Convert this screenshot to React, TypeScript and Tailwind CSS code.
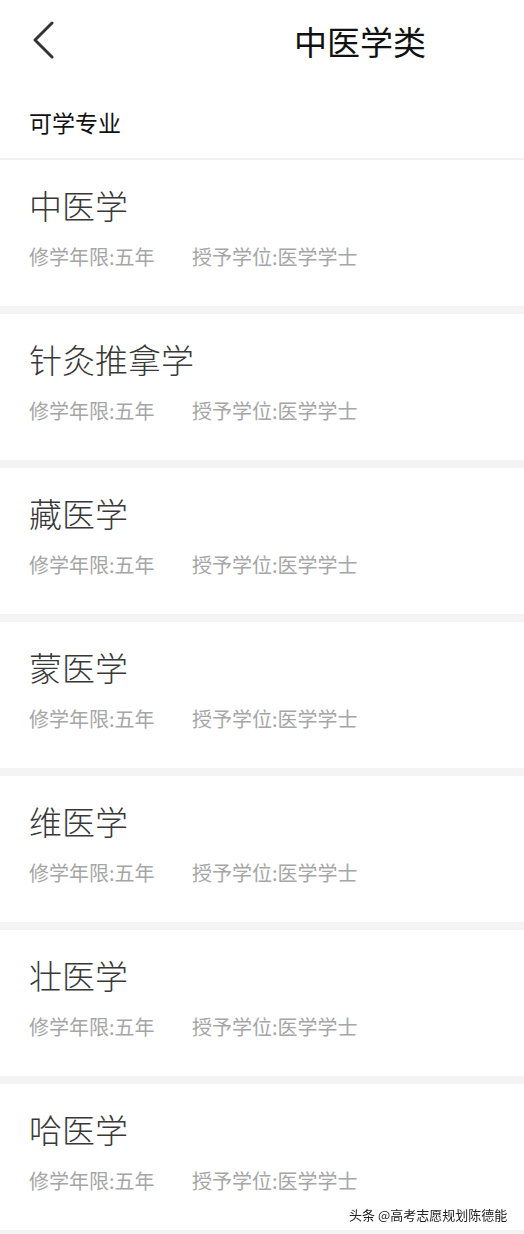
import React from "react";

const majors = ["中医学", "针灸推拿学", "藏医学", "蒙医学", "维医学", "壮医学", "哈医学"];

const font = "font-['Noto_Sans_CJK_SC','Noto_Sans',sans-serif]";

const App = () => {
  return (
    <div className={`w-[524px] min-h-[1234px] bg-[#f4f4f4] ${font}`}>
      {/* Header */}
      <div className="bg-white">
        <div className="h-[82px] flex items-center relative">
          <svg
            className="absolute left-[31px] top-[21px]"
            width="24"
            height="38"
            viewBox="0 0 24 38"
            fill="none"
          >
            <path
              d="M21 2 L4 19 L21 36"
              stroke="#333"
              strokeWidth="3"
              strokeLinecap="round"
              strokeLinejoin="round"
            />
          </svg>
          <div className="w-full text-center pl-[196px] text-[33px] leading-none text-[#111]">
            中医学类
          </div>
        </div>
        <div className="h-[76px] flex items-center pl-[29px] text-[23px] text-[#111] pt-[4px]">
          可学专业
        </div>
      </div>
      <div className="h-[2px] bg-[#f2f2f2]" />

      {/* List */}
      <div className="flex flex-col gap-[8px]">
        {majors.map((m) => (
          <div key={m} className="h-[146px] bg-white pl-[29px] flex flex-col">
            <div className="mt-[25px] text-[33px] leading-[40px] text-[#383838] font-light">{m}</div>
            <div className="mt-[20px] flex text-[20px] leading-[24px] text-[#a6a6a6]">
              <span className="w-[163px]">修学年限:五年</span>
              <span>授予学位:医学学士</span>
            </div>
          </div>
        ))}
      </div>

      {/* Watermark */}
      <div className="fixed left-[349px] top-[1205px] text-[13px] leading-[20px] text-[#222] [text-shadow:0_0_2px_#fff,0_0_2px_#fff]">
        头条 @高考志愿规划陈德能
      </div>
    </div>
  );
};

export default App;
